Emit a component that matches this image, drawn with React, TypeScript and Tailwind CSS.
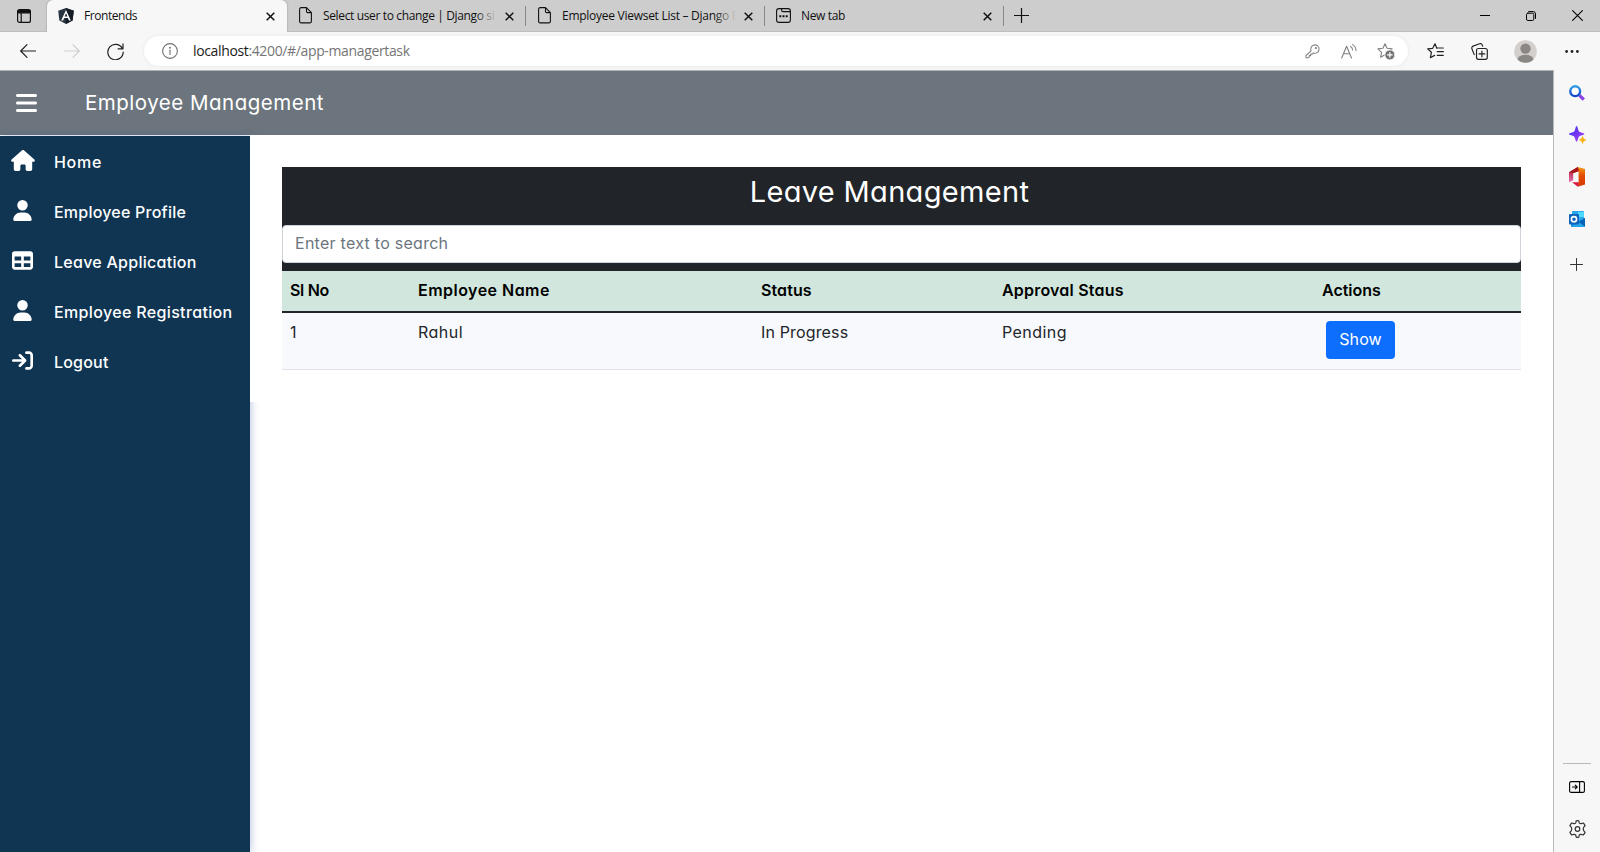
import type { ReactNode } from 'react';
import { FaArrowRightToBracket, FaBars, FaHouse, FaTable, FaUser } from 'react-icons/fa6';

const stroke = { fill: 'none', stroke: 'currentColor', strokeLinecap: 'round', strokeLinejoin: 'round' } as const;

function CloseIcon() {
  return (
    <svg className="size-[9px] shrink-0" viewBox="0 0 9 9" {...stroke} strokeWidth={1.5} strokeLinecap="butt">
      <path d="M.7.7l7.6 7.6M8.3.7L.7 8.3" />
    </svg>
  );
}

function PageIcon() {
  return (
    <svg className="h-[17px] w-[13px] shrink-0" viewBox="0 0 13 17" {...stroke} strokeWidth={1.1}>
      <path d="M7.5.6H2.1A1.5 1.5 0 0 0 .6 2.1v12.3a1.5 1.5 0 0 0 1.5 1.5h8.8a1.5 1.5 0 0 0 1.5-1.5V5.6zM7.5.6v3.8a1.2 1.2 0 0 0 1.2 1.2h3.7" />
    </svg>
  );
}

function NewTabIcon() {
  return (
    <svg className="size-[15px] shrink-0" viewBox="0 0 15 15" {...stroke} strokeWidth={1.1}>
      <rect x=".6" y=".6" width="13.8" height="13.8" rx="2.4" />
      <path d="M5.6.8v1.4a1.4 1.4 0 0 0 1.4 1.4h7.2" />
      <path d="M3.3 8.2h2M6.5 8.2h2M9.7 8.2h2" strokeWidth={2} strokeLinecap="butt" />
    </svg>
  );
}

function AngularIcon() {
  return (
    <svg className="h-[16px] w-[16px] shrink-0" viewBox="0 0 16 16">
      <path d="M8 0l7.8 2.7-1.2 9.8L8 16l-6.6-3.5L.2 2.7z" fill="#2a3440" />
      <path d="M8 0l7.8 2.7-1.2 9.8L8 16z" fill="#141b24" />
      <path d="M8 1.9L3.2 12.5h1.9l1-2.4h3.8l1 2.4h1.9zm0 3.3l1.4 3.4H6.6z" fill="#fff" />
    </svg>
  );
}

function Tab({ icon, title, fade }: { icon: ReactNode; title: ReactNode; fade?: boolean }) {
  return (
    <div className="flex h-full items-center">
      {icon}
      <div className="relative ml-[11px] w-[174px] overflow-hidden whitespace-nowrap pt-px">
        {title}
        {fade && <div className="absolute inset-y-0 right-0 w-[22px] bg-linear-to-r from-transparent to-[#cdcdcd]" />}
      </div>
    </div>
  );
}

function TabBar() {
  return (
    <div className="flex h-8 items-center border-b border-[#bebebe] bg-[#cdcdcd] font-['Open_Sans','Noto_Sans',sans-serif] text-[12px] text-[#111]">
      <svg className="ml-[17px] size-[14px] shrink-0" viewBox="0 0 14 14" {...stroke} strokeWidth={1.2}>
        <rect x=".6" y=".6" width="12.8" height="12.8" rx="2" />
        <path d="M1 1.6h12v2.2H1z" fill="currentColor" />
        <path d="M4.2 4v9" />
      </svg>
      <div className="-mb-px ml-4 flex h-8 w-[240px] shrink-0 items-center rounded-t-[6px] bg-[#f7f7f7] shadow-[0_0_2px_rgba(0,0,0,0.3)] [clip-path:inset(0_-3px_0_-3px)]">
        <div className="ml-[11px]"><AngularIcon /></div>
        <span className="ml-[10px] w-[182px] tracking-[-0.45px]">Frontends</span>
        <CloseIcon />
      </div>
      <div className="flex h-full w-[240px] shrink-0 items-center pl-[12px]">
        <Tab icon={<PageIcon />} fade title={<span className="tracking-[-0.36px]">Select user to change | Django si</span>} />
        <div className="ml-[8px] flex items-center pt-px"><CloseIcon /></div>
        <div className="ml-[11px] h-[20px] w-px bg-[#888]" />
      </div>
      <div className="flex h-full w-[239px] shrink-0 items-center pl-[11px]">
        <Tab icon={<PageIcon />} fade title={<span className="tracking-[-0.27px]">Employee Viewset List – Django R</span>} />
        <div className="ml-[8px] flex items-center pt-px"><CloseIcon /></div>
        <div className="ml-[11px] h-[20px] w-px bg-[#888]" />
      </div>
      <div className="flex h-full w-[239px] shrink-0 items-center pl-[10px]">
        <Tab icon={<NewTabIcon />} title={<span className="-ml-px tracking-[-0.35px]">New tab</span>} />
        <div className="ml-[7px] flex items-center pt-px"><CloseIcon /></div>
        <div className="ml-[11px] h-[20px] w-px bg-[#888]" />
      </div>
      <svg className="ml-[9px] size-[15px] shrink-0" viewBox="0 0 15 15" {...stroke} strokeWidth={1.2}>
        <path d="M7.5.5v14M.5 7.5h14" />
      </svg>
      <div className="ml-auto flex items-center pr-[17px] text-black">
        <div className="h-px w-[10px] bg-black" />
        <svg className="ml-[36px] size-[10px]" viewBox="0 0 10 10" {...stroke} strokeWidth={1}>
          <rect x=".5" y="2.2" width="7.3" height="7.3" rx="1.4" />
          <path d="M2.6.6h4.6a2.3 2.3 0 0 1 2.3 2.3v4.5" />
        </svg>
        <svg className="ml-[36px] size-[11px]" viewBox="0 0 11 11" {...stroke} strokeWidth={1.1}>
          <path d="M.6.6l9.8 9.8M10.4.6L.6 10.4" />
        </svg>
      </div>
    </div>
  );
}

const starPath = 'M8 .8l2.1 4.5 5 .6-3.7 3.4 1 4.9L8 11.8l-4.4 2.4 1-4.9L.9 5.9l5-.6z';

function Toolbar() {
  return (
    <div className="flex h-[38px] items-center bg-[#f7f7f7] text-[#222]">
      <svg className="ml-5 h-[14px] w-4" viewBox="0 0 16 14" {...stroke} strokeWidth={1.2}>
        <path d="M7 .6L.7 7 7 13.4M.7 7h14.8" />
      </svg>
      <svg className="ml-[28px] h-[14px] w-4 text-[#cfcfcf]" viewBox="0 0 16 14" {...stroke} strokeWidth={1.2}>
        <path d="M9 .6L15.3 7 9 13.4M15.3 7H.5" />
      </svg>
      <svg className="ml-[27px] size-[17px]" viewBox="0 0 17 17" {...stroke} strokeWidth={1.2}>
        <path d="M15.4 5.6A7.7 7.7 0 1 0 16.2 9M16 .9v4.9h-4.9" />
      </svg>
      <div className="ml-[20px] flex h-[30px] w-[1264px] items-center rounded-full bg-white shadow-[0_0_4px_rgba(0,0,0,0.07)]">
        <svg className="ml-[18px] size-4 text-[#707070]" viewBox="0 0 16 16" {...stroke} strokeWidth={1.1}>
          <circle cx="8" cy="8" r="7.4" />
          <path d="M8 7.2v4.2" />
          <circle cx="8" cy="4.8" r=".4" fill="currentColor" />
        </svg>
        <span className="-mt-px ml-[15px] font-['Open_Sans','Noto_Sans',sans-serif] text-[14px] tracking-[-0.36px] text-[#757575]">
          <span className="text-[#1b1b1b]">localhost</span>:4200/#/app-managertask
        </span>
        <div className="ml-auto flex items-center text-[#808080]">
          <svg className="size-[15px]" viewBox="0 0 15 15" {...stroke} strokeWidth={1.05}>
            <path d="M6.1 6.9A4.2 4.2 0 1 1 8.4 9L7.2 10.1H5.7v1.5H4.3v1.2l-1 1H1v-2.3z" />
            <circle cx="10.9" cy="4.1" r=".6" />
          </svg>
          <svg className="ml-[21px] h-[15px] w-4" viewBox="0 0 16 15" {...stroke} strokeWidth={1.1}>
            <path d="M.7 14L5.6 2.2 10.5 14M2.5 9.8h6.2" />
            <path d="M9.6 2.5a4.2 4.2 0 0 1 2 3.5M11.6.6A7 7 0 0 1 15 6.6" />
          </svg>
          <svg className="mr-[13px] ml-[20px] h-[17px] w-[18px]" viewBox="0 0 18 17" {...stroke} strokeWidth={1.1}>
            <path d={starPath} />
            <circle cx="12.9" cy="11.9" r="5" fill="#707070" stroke="#fff" strokeWidth={0.8} />
            <path d="M12.9 9.6v4.6M10.6 11.9h4.6" stroke="#fff" strokeWidth={1.2} />
          </svg>
        </div>
      </div>
      <svg className="ml-[19px] h-[16px] w-[17px]" viewBox="0 0 17 16" {...stroke} strokeWidth={1.2}>
        <path d="M9.7 5L8 .8 5.7 5.3l-5 .6 3.7 3.4-1 5.4L7.6 12.4" />
        <path d="M9.7 5h6.6M10.2 8.7h6.1M10.2 12.3h6.1" />
      </svg>
      <svg className="ml-[27px] size-[17px]" viewBox="0 0 17 17" {...stroke} strokeWidth={1.15}>
        <rect x="5.5" y="5.5" width="10.8" height="10.8" rx="2" />
        <path d="M10.9 8v5.8M8 10.9h5.8" />
        <path d="M3.2 11.6L.9 5.7a2 2 0 0 1 1.2-2.6L8.6.7a2 2 0 0 1 2.6 1.2l.5 1.3" />
      </svg>
      <svg className="ml-[26px] size-[23px]" viewBox="0 0 23 23">
        <clipPath id="avatar"><circle cx="11.5" cy="11.5" r="11.3" /></clipPath>
        <g clipPath="url(#avatar)">
          <rect width="23" height="23" fill="#d2cfcc" />
          <circle cx="11.5" cy="8.6" r="5.2" fill="#8b8784" />
          <ellipse cx="11.5" cy="19.7" rx="8" ry="5" fill="#8b8784" />
        </g>
      </svg>
      <svg className="ml-[28px] h-[3px] w-[14px]" viewBox="0 0 14 3" fill="currentColor">
        <circle cx="1.6" cy="1.5" r="1.4" />
        <circle cx="7" cy="1.5" r="1.4" />
        <circle cx="12.4" cy="1.5" r="1.4" />
      </svg>
    </div>
  );
}

function EdgeSidebar() {
  return (
    <aside className="flex w-[47px] shrink-0 flex-col items-center border-l border-[#b9b9b9] bg-[#f7f7f7] text-[#333]">
      <svg className="mt-[15px] size-4" viewBox="0 0 16 16" fill="none">
        <defs>
          <linearGradient id="lens" x1="0" y1="0" x2="0" y2="1"><stop stopColor="#2f9be8" /><stop offset="1" stopColor="#1044c8" /></linearGradient>
          <linearGradient id="spark" x1="0" y1="0" x2="1" y2="1"><stop stopColor="#3b3df0" /><stop offset=".55" stopColor="#7a35f2" /><stop offset="1" stopColor="#c050f5" /></linearGradient>
          <linearGradient id="officeL" x1="0" y1="0" x2="0" y2="1"><stop stopColor="#a5141c" /><stop offset="1" stopColor="#e870b8" /></linearGradient>
          <linearGradient id="officeR" x1="0" y1="0" x2="0" y2="1"><stop stopColor="#f59a10" /><stop offset=".45" stopColor="#e04a05" /><stop offset="1" stopColor="#d83b01" /></linearGradient>
        </defs>
        <path d="M10.5 10.3l4.3 4.3" stroke="#8a3fe8" strokeWidth={3.2} />
        <circle cx="6.2" cy="6.2" r="4.9" stroke="url(#lens)" strokeWidth={2.4} fill="#fff" />
      </svg>
      <svg className="mt-[25px] h-[18px] w-[17px]" viewBox="0 0 17 18">
        <path d="M7.6 0c.5 0 .6.3.8.9l1 3.3c.4 1.2.9 1.7 2.1 2.1l3 .9c.6.2.8.4.8.8s-.2.6-.8.8l-3 .9c-1.2.4-1.7.9-2.1 2.1l-1 2.9c-.2.6-.3.9-.8.9s-.6-.3-.8-.9l-1-2.9c-.4-1.2-.9-1.7-2.1-2.1l-3-.9C.2 8.6 0 8.4 0 8s.2-.6.7-.8l3-.9c1.2-.4 1.7-.9 2.1-2.1l1-3.3C7 .3 7.1 0 7.6 0z" fill="url(#spark)" />
        <path d="M13.6 10.3l1 2.5 2.4 1.1-2.4 1.1-1 2.5-1-2.5-2.4-1.1 2.4-1.1z" fill="#f7b010" stroke="#f7b010" strokeWidth=".5" />
      </svg>
      <svg className="mt-[23px] h-5 w-4" viewBox="0 0 16 20">
        <path d="M0 5.2L8.8 0l1.5 4L4.2 6.3v6.9L0 15.3z" fill="url(#officeL)" />
        <path d="M8.8 0L16 2.1v15.3L9.6 19.5V4.3L5.5 5.4z" fill="url(#officeR)" />
        <path d="M0 5.2L8.8 0l1.1 4.1-5.7 2z" fill="#a8151a" />
        <path d="M3 15.2h6.8v4.4H8.6z" fill="#dc1737" />
      </svg>
      <svg className="mt-[24px] h-4 w-4" viewBox="0 0 16 16">
        <rect x="3" y="0" width="12" height="12" rx=".8" fill="#28a8ea" />
        <path d="M9 1h6v5H9z" fill="#50d9ff" />
        <path d="M2 8.5l7 2.5 7-4v8.2a.8.8 0 0 1-.8.8H2.8a.8.8 0 0 1-.8-.8z" fill="#1490df" />
        <path d="M9 11l7-4v8.5z" fill="#0a63b5" />
        <path d="M2.5 15.8L9.5 11l6.3 4.8z" fill="#28a8ea" />
        <rect x="0" y="3" width="10" height="10.5" rx="1" fill="#0f64bc" />
        <circle cx="5" cy="8.2" r="2.6" fill="none" stroke="#fff" strokeWidth={1.6} />
      </svg>
      <svg className="mt-[31px] mr-px size-[13px]" viewBox="0 0 13 13" {...stroke} strokeWidth={1}>
        <path d="M6.5.5v12M.5 6.5h12" />
      </svg>
      <div className="mt-auto h-px w-[28px] bg-[#b9b9b9]" />
      <svg className="mt-[17px] h-[12px] w-4 text-black" viewBox="0 0 16 12" {...stroke} strokeWidth={1.1}>
        <rect x=".6" y=".6" width="14.8" height="10.8" rx="1.5" />
        <path d="M10.6.8v10.4M3.5 6h4.6M6.3 4.1L8.2 6 6.3 7.9" />
      </svg>
      <svg className="mt-[27px] mb-[14px] h-[18px] w-[17px]" viewBox="0 0 17 18" {...stroke} strokeWidth={1.2}>
        <path d="M7.2.8Q8.5.4 9.8.8L10.3 3Q11 3.9 12.1 3.6L14.3 3Q15.6 4.2 16.1 5.7L14.6 7.4Q14 9 14.6 10.6L16.1 12.3Q15.6 13.8 14.3 15L12.1 14.4Q11 14.1 10.3 15L9.8 17.2Q8.5 17.6 7.2 17.2L6.7 15Q6 14.1 4.9 14.4L2.7 15Q1.4 13.8.9 12.3L2.4 10.6Q3 9 2.4 7.4L.9 5.7Q1.4 4.2 2.7 3L4.9 3.6Q6 3.9 6.7 3z" />
        <circle cx="8.5" cy="9" r="2.3" />
      </svg>
    </aside>
  );
}

const menu = [
  { label: 'Home', icon: <FaHouse className="h-[21px] w-[24px]" />, className: 'tracking-[0.7px]' },
  { label: 'Employee Profile', icon: <FaUser className="size-[21px]" />, className: 'tracking-[0.22px]' },
  { label: 'Leave Application', icon: <FaTable className="size-[21px]" />, className: 'tracking-[0.27px]' },
  { label: 'Employee Registration', icon: <FaUser className="size-[21px]" />, className: 'tracking-[0.35px]' },
  { label: 'Logout', icon: <FaArrowRightToBracket className="size-[21px]" />, className: 'tracking-[0.2px]' },
];

function AppSidebar() {
  return (
    <nav className="mt-px w-[250px] shrink-0 bg-[#103553] text-white shadow-[1px_0_8px_rgba(30,70,150,0.3)]">
      {menu.map((item) => (
        <a key={item.label} className="flex h-[50px] items-center">
          <span className="flex w-[45px] justify-center pb-px">{item.icon}</span>
          <span className={`ml-[9px] pt-[2px] text-[16px] leading-6 font-medium whitespace-nowrap ${item.className}`}>{item.label}</span>
        </a>
      ))}
    </nav>
  );
}

function LeaveManagement() {
  return (
    <main className="h-[267px] flex-1 bg-white p-8">
      <section className="bg-[#212529]">
        <h1 className="h-[58px] pt-[7px] pr-[24px] text-center text-[29px] leading-[35px] tracking-[0.33px] text-white">Leave Management</h1>
        <input
          className="block h-[38px] w-full rounded-[4px] border border-[#ced4da] bg-white px-3 pb-[2px] text-[16px] tracking-[0.27px] placeholder:text-[#6c757d]"
          placeholder="Enter text to search"
        />
        <div className="h-2" />
      </section>
      <table className="w-full table-fixed border-collapse text-left text-[16px] leading-6 text-[#212529]">
        <colgroup>
          <col className="w-[128px]" />
          <col className="w-[343px]" />
          <col className="w-[241px]" />
          <col className="w-[320px]" />
          <col />
        </colgroup>
        <thead className="bg-[#d1e7dd] text-black">
          <tr className="h-[41px] border-b-2 border-[#212529]">
            <th className="px-2 pt-1.5 pb-2 font-semibold tracking-[-0.3px]">Sl No</th>
            <th className="px-2 pt-1.5 pb-2 font-semibold tracking-[0.47px]">Employee Name</th>
            <th className="px-2 pt-1.5 pb-2 font-semibold tracking-[0.1px]">Status</th>
            <th className="px-2 pt-1.5 pb-2 font-semibold tracking-[0.2px]">Approval Staus</th>
            <th className="px-2 pt-1.5 pb-2 font-semibold tracking-[0px]">Actions</th>
          </tr>
        </thead>
        <tbody>
          <tr className="h-[57px] border-b border-[#dee2e6] bg-[#f8f9fc] align-top">
            <td className="px-2 pt-[7px]">1</td>
            <td className="px-2 pt-[7px] tracking-[0.5px]">Rahul</td>
            <td className="px-2 pt-[7px] tracking-[0.15px]">In Progress</td>
            <td className="px-2 pt-[7px] tracking-[0.45px]">Pending</td>
            <td className="px-3 pt-2">
              <button className="block h-[38px] w-[69px] rounded-[4px] bg-[#0d6efd] pb-[2px] text-[16px] tracking-[0.1px] text-white">Show</button>
            </td>
          </tr>
        </tbody>
      </table>
    </main>
  );
}

export default function App() {
  return (
    <div className="flex h-[852px] w-[1600px] flex-col overflow-hidden bg-white">
      <TabBar />
      <Toolbar />
      <div className="flex min-h-0 flex-1">
        <div className="flex min-w-0 flex-1 flex-col border-t border-[#b0b3b5] font-['Inter',sans-serif] [font-feature-settings:'cv11']">
          <header className="flex h-16 shrink-0 items-center bg-[#6c757d] text-white">
            <FaBars className="ml-4 h-6 w-[21px]" />
            <span className="ml-[48px] text-[20.5px] tracking-[0.5px]">Employee Management</span>
          </header>
          <div className="flex min-h-0 flex-1">
            <AppSidebar />
            <div className="relative flex-1"><LeaveManagement /></div>
          </div>
        </div>
        <EdgeSidebar />
      </div>
    </div>
  );
}
